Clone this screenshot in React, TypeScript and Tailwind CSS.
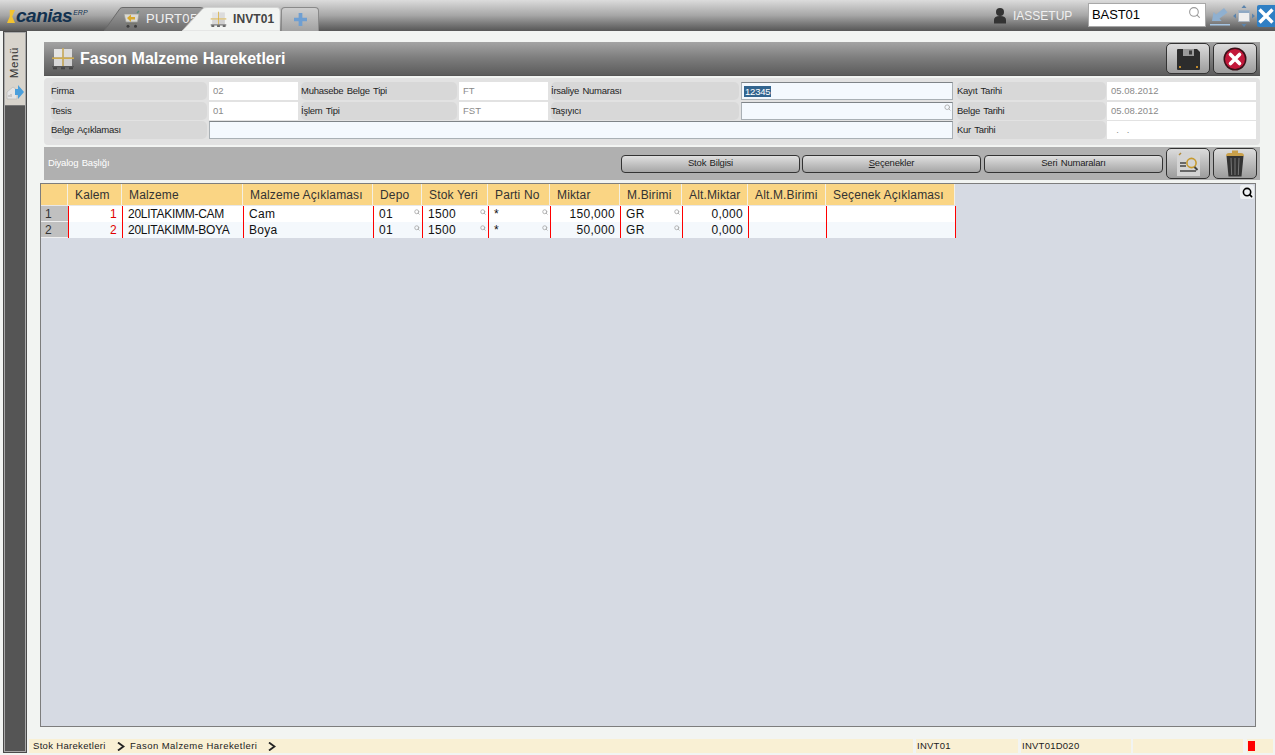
import React from "react";
import { Search } from "lucide-react";

const Pallet = ({ s = 24 }: { s?: number }) => (
  <svg width={s} height={s} viewBox="0 0 24 24">
    <rect x="3" y="2" width="8.5" height="8.5" fill="#e4e4e4" />
    <rect x="12.5" y="2" width="8.5" height="8.5" fill="#dcdcdc" />
    <rect x="3" y="12" width="8.5" height="7" fill="#d8d8d8" />
    <rect x="12.5" y="12" width="8.5" height="7" fill="#d0d0d0" />
    <rect x="1" y="10.500" width="22" height="1.400" fill="#d9b24a" />
    <rect x="11.400" y="1" width="1.200" height="18" fill="#d9b24a" />
    <rect x="1" y="19" width="22" height="1.300" fill="#555" />
    <rect x="2" y="20.300" width="4" height="2" fill="#444" />
    <rect x="10" y="20.300" width="4" height="2" fill="#444" />
    <rect x="18" y="20.300" width="4" height="2" fill="#444" />
  </svg>
);

const Cart = () => (
  <svg width="18" height="20" viewBox="0 0 18 20">
    <path d="M1 5h15l-1.500 8H3z" fill="#d9d9d4" stroke="#9a9a94" strokeWidth=".7" />
    <path d="M4 9l4-3.500V8h4v2.500H8V13z" fill="#d8a92e" />
    <rect x="3" y="14" width="11" height="1.300" fill="#77776f" />
    <circle cx="5" cy="17.300" r="1.500" fill="#3e3e3e" />
    <circle cx="12.500" cy="17.300" r="1.500" fill="#3e3e3e" />
    <path d="M14 4l2-2" stroke="#5a8c7a" strokeWidth="1.500" />
  </svg>
);

const TopTabs = () => (
  <div className="flex h-[31px] items-end ml-[7px] relative">
    <div className="relative w-[100px] h-[24px] flex items-center">
      <svg className="absolute left-0 top-0" width="100" height="24" viewBox="0 0 100 24">
        <path d="M0 24L16 1.500Q17 .5 19 .5H96Q99 .5 101 3L100 24z" fill="#7d7d7d" fillOpacity=".55" stroke="#6a6a6a" strokeWidth="1" />
      </svg>
      <div className="relative ml-[19px] flex items-center gap-[5px]">
        <Cart />
        <span className="text-[13px] text-[#f0f0f0] tracking-[.3px] font-['Liberation_Sans',sans-serif] whitespace-nowrap">PURT05</span>
      </div>
    </div>
    <div className="relative ml-[-22px] w-[99px] h-[24px] flex items-center">
      <svg className="absolute left-0 top-0" width="99" height="24" viewBox="0 0 99 24">
        <path d="M0 24L21 1.500Q22.500 .5 25 .5H95Q98 .5 98 4V24z" fill="#f2f4f2" stroke="#d0d0d0" strokeWidth=".8" />
      </svg>
      <div className="relative ml-[28px] flex items-center gap-[6px]">
        <Pallet s={17} />
        <span className="text-[12px] font-bold text-[#444] tracking-[.1px] font-['Liberation_Sans',sans-serif]">INVT01</span>
      </div>
    </div>
    <div className="w-[38px] h-[24px] border border-b-0 border-[#8a8a8a] rounded-t-[4px] bg-gradient-to-b from-[#cfcfcf] to-[#a2a2a2] flex items-center justify-center">
      <svg width="13" height="13" viewBox="0 0 14 14">
        <path d="M5 0h4v5h5v4H9v5H5V9H0V5h5z" fill="#6f9fd2" />
      </svg>
    </div>
  </div>
);

const TopBar = () => (
  <div className="h-[31px] shrink-0 flex items-end bg-gradient-to-b from-[#dcdcdc] via-[#a6a6a6] to-[#565656] font-['Liberation_Sans',sans-serif]">
    <div className="w-[97px] h-[31px] flex items-center pl-[7px] shrink-0">
      <div className="w-[8px] h-[13px] bg-[#f2c230] mr-[1px] mt-[2px] [clip-path:polygon(35%_0,100%_0,65%_50%,100%_100%,0_100%,35%_50%)]" />
      <span className="text-[19px] leading-none font-bold italic text-[#12314f] tracking-[-.5px] font-['Liberation_Sans',sans-serif]">canias</span>
      <span className="text-[7px] italic text-[#12314f] self-start mt-[8px] ml-[1px]">ERP</span>
    </div>
    <TopTabs />
    <div className="flex-1" />
    <div className="flex items-center h-[31px]">
      <svg width="14" height="18" viewBox="0 0 14 18" className="mr-[6px]">
        <circle cx="7" cy="5" r="4" fill="#333" />
        <path d="M1 16.500V13q0-4 6-4t6 4v3.500z" fill="#333" />
      </svg>
      <span className="text-[12px] text-[#f0f0f0] w-[75px]">IASSETUP</span>
      <div className="w-[118px] h-[24px] bg-white border border-[#a8a8a8] flex items-center justify-between pl-[3px] pr-[4px] mb-[1px]">
        <span className="text-[13px] text-black tracking-[-.1px]">BAST01</span>
        <Search size={13} color="#9a9a9a" className="mb-[5px]" />
      </div>
      <svg width="22" height="22" viewBox="0 0 22 22" className="ml-[3px]">
        <path d="M3 16l1.500-9 2.600 2.600L15 3l3.500 4.500-8 6 2.200 2.500z" fill="#8fb0d0" />
        <rect x="1" y="19" width="20" height="1.500" fill="#a6c6e4" />
      </svg>
      <svg width="22" height="22" viewBox="0 0 22 22" className="ml-[2px]">
        <rect x="5.500" y="5.500" width="11" height="11" fill="#eee" stroke="#a8b4c0" strokeWidth=".8" />
        <rect x="5.500" y="5.500" width="11" height="2.500" fill="#8fa9c4" />
        <path d="M11 0l2.500 3h-5zM11 22l2.500-3h-5zM0 11l3-2.500v5zM22 11l-3-2.500v5z" fill="#5b84ad" />
      </svg>
      <div className="w-[18px] h-[22px] bg-[#2f7fc4] flex items-center justify-center ml-[2px] rounded-l-[2px] overflow-hidden">
        <svg width="18" height="18" viewBox="0 0 18 18">
          <path d="M2.500 2.500l13 13M15.500 2.500l-13 13" stroke="#fff" strokeWidth="3.400" />
        </svg>
      </div>
    </div>
  </div>
);

const SideBar = () => (
  <div className="w-[22px] ml-[4px] mr-[3px] shrink-0 flex flex-col bg-[#555555] border border-[#a8a8a8] outline outline-1 outline-[#4a4a4a] mt-[1px] mb-[3px]">
    <div className="h-[73px] bg-[#d8d4cc] flex flex-col items-center border-b border-[#777]">
      <span className="text-[11.500px] text-[#333] font-['Liberation_Sans',sans-serif] [writing-mode:vertical-rl] rotate-180 mt-[14px] tracking-[.6px] whitespace-nowrap">Menü</span>
      <svg width="19" height="17" viewBox="0 0 19 17" className="mt-[6px]">
        <path d="M1 15V8l6-5 4 3v9z" fill="#e4e4e4" stroke="#b4b4b4" strokeWidth=".6" />
        <path d="M3 13v-2M5 13v-3" stroke="#9a9a9a" strokeWidth=".8" />
        <path d="M9 5h3V1l6 7-6 7v-4H9z" fill="#4a9fdc" />
      </svg>
    </div>
  </div>
);

const Label = ({ w, children }: { w: number; children: React.ReactNode }) => (
  <div style={{ width: w }} className="h-[18px] rounded-[5px] bg-[#d8d8d8] flex items-center text-[9.5px] tracking-[-.25px] [word-spacing:1px] text-[#1f1f1f] whitespace-nowrap shrink-0">
    {children}
  </div>
);

const RO = ({ w, children }: { w: number; children?: React.ReactNode }) => (
  <div style={{ width: w }} className="h-[18px] bg-white flex items-center pl-[4px] text-[9.5px] text-[#8a8a8a] shrink-0 whitespace-pre">
    {children}
  </div>
);

const Edit = ({ w, children }: { w: number; children?: React.ReactNode }) => (
  <div style={{ width: w }} className="relative h-[18px] bg-[#f4f9fe] border border-[#a9b0b5] border-t-[#7f8488] flex items-center pl-[2px] text-[9.5px] shrink-0">
    {children}
  </div>
);

const Form = () => (
  <div className="mt-[2px] h-[67px] bg-[#e2e2e2] rounded-[4px] pt-[4px] pl-[7px] flex flex-col gap-[2px] font-['Liberation_Sans',sans-serif]">
    <div className="flex">
      <Label w={156}>Firma</Label>
      <div className="w-[2px]" />
      <RO w={89}>02</RO>
      <div className="w-[3px]" />
      <Label w={156}>Muhasebe Belge Tipi</Label>
      <div className="w-[2px]" />
      <RO w={89}>FT</RO>
      <div className="w-[3px]" />
      <Label w={188}>İrsaliye Numarası</Label>
      <div className="w-[2px]" />
      <Edit w={212}>
        <span className="bg-[#33658f] text-white leading-[11px] px-[1px] tracking-[-.2px]">12345</span>
      </Edit>
      <div className="w-[4px]" />
      <Label w={149}>Kayıt Tarihi</Label>
      <div className="w-[1px]" />
      <RO w={149}>05.08.2012</RO>
    </div>
    <div className="flex">
      <Label w={156}>Tesis</Label>
      <div className="w-[2px]" />
      <RO w={89}>01</RO>
      <div className="w-[3px]" />
      <Label w={156}>İşlem Tipi</Label>
      <div className="w-[2px]" />
      <RO w={89}>FST</RO>
      <div className="w-[3px]" />
      <Label w={188}>Taşıyıcı</Label>
      <div className="w-[2px]" />
      <Edit w={212}>
        <Search size={7} color="#aaa" strokeWidth={3} className="absolute right-[1px] top-[1px]" />
      </Edit>
      <div className="w-[4px]" />
      <Label w={149}>Belge Tarihi</Label>
      <div className="w-[1px]" />
      <RO w={149}>05.08.2012</RO>
    </div>
    <div className="flex mt-[-1px]">
      <Label w={156}>Belge Açıklaması</Label>
      <div className="w-[2px]" />
      <Edit w={744} />
      <div className="w-[4px]" />
      <Label w={149}>Kur Tarihi</Label>
      <div className="w-[1px]" />
      <RO w={149}>{"  .   ."}</RO>
    </div>
  </div>
);

const TextBtn = ({ w, children, ml = 0 }: { w: number; ml?: number; children: React.ReactNode }) => (
  <div style={{ width: w, marginLeft: ml }} className="h-[18px] rounded-[4px] border border-[#333] bg-gradient-to-b from-[#e0e0e0] to-[#a6a6a6] flex items-center justify-center text-[9.5px] tracking-[-.2px] [word-spacing:1px] text-[#222] shrink-0">
    {children}
  </div>
);

const IconBtn = ({ children, h = 31 }: { children: React.ReactNode; h?: number }) => (
  <div style={{ height: h }} className="w-[44px] rounded-[5px] border border-[#333] bg-gradient-to-b from-[#dcdcdc] to-[#9c9c9c] flex items-center justify-center shrink-0">
    {children}
  </div>
);

const TitleBar = () => (
  <div className="h-[34px] bg-gradient-to-b from-[#a4a4a4] via-[#7c7c7c] to-[#5c5c5c] flex items-center pl-[7px] pr-[3px] border-b border-[#555] font-['Liberation_Sans',sans-serif]">
    <Pallet s={24} />
    <span className="ml-[5px] text-[16px] font-bold text-white">Fason Malzeme Hareketleri</span>
    <div className="flex-1" />
    <div className="flex gap-[3px]">
      <IconBtn>
        <svg width="24" height="22" viewBox="0 0 24 22">
          <path d="M1 2q0-1 1-1h19l3 3v17q0 1-1 1H2q-1 0-1-1z" fill="#2c2c2c" />
          <rect x="7" y="1" width="11" height="7" fill="#9a9a9a" />
          <rect x="13" y="2.500" width="3" height="4" fill="#3a3a3a" />
          <rect x="3" y="18" width="2" height="2" fill="#c08a2a" />
          <rect x="20" y="18" width="2" height="2" fill="#c08a2a" />
        </svg>
      </IconBtn>
      <IconBtn>
        <svg width="24" height="24" viewBox="0 0 24 24">
          <circle cx="12" cy="12" r="11.500" fill="#3a1018" />
          <circle cx="12" cy="12" r="10" fill="#c2183a" />
          <path d="M7.500 7.500l9 9M16.500 7.500l-9 9" stroke="#fff" strokeWidth="3.600" strokeLinecap="round" />
        </svg>
      </IconBtn>
    </div>
  </div>
);

const DialogBar = () => (
  <div className="mt-[2px] h-[33px] bg-[#b0b0b0] flex items-center pl-[4px] pr-[3px] font-['Liberation_Sans',sans-serif]">
    <span className="text-[9.5px] text-white tracking-[-.2px] [word-spacing:1px] w-[573px] shrink-0">Diyalog Başlığı</span>
    <TextBtn w={179}>Stok Bilgisi</TextBtn>
    <TextBtn w={179} ml={2}><span><u>S</u>eçenekler</span></TextBtn>
    <TextBtn w={179} ml={3}>Seri Numaraları</TextBtn>
    <div className="flex gap-[3px] ml-[3px]">
      <IconBtn>
        <svg width="24" height="24" viewBox="0 0 24 24">
          <rect x="1" y="1" width="23" height="23" fill="#d4d4d4" />
          <path d="M3 3l2-2" stroke="#b08a3a" strokeWidth="1.500" />
          <path d="M4 11h6M4 14h6M4 19h16" stroke="#444" strokeWidth="1.600" />
          <circle cx="15.500" cy="11" r="4.600" fill="none" stroke="#c79a2e" strokeWidth="1.600" />
          <path d="M18.500 15l3 3" stroke="#444" strokeWidth="2" />
        </svg>
      </IconBtn>
      <IconBtn>
        <svg width="20" height="27" viewBox="0 0 20 27">
          <rect x="7" y="0.500" width="6" height="3" fill="#c9a04a" />
          <path d="M1 6q0-3 3-3h12q3 0 3 3z" fill="#c9a04a" />
          <path d="M1.500 6h17l-2 20.500h-13z" fill="#333" />
          <path d="M6 8l.7 17M10 8v17M14 8l-.7 17" stroke="#777" strokeWidth="1" />
        </svg>
      </IconBtn>
    </div>
  </div>
);

const cols = [
  { t: "Kalem", w: 54 },
  { t: "Malzeme", w: 121 },
  { t: "Malzeme Açıklaması", w: 130 },
  { t: "Depo", w: 49 },
  { t: "Stok Yeri", w: 66 },
  { t: "Parti No", w: 62 },
  { t: "Miktar", w: 70 },
  { t: "M.Birimi", w: 62 },
  { t: "Alt.Miktar", w: 66 },
  { t: "Alt.M.Birimi", w: 78 },
  { t: "Seçenek Açıklaması", w: 129 },
];

type Cell = { v?: string; right?: boolean; lookup?: boolean; tight?: boolean; red?: boolean };
const rows: Cell[][] = [
  [
    { v: "1", right: true, red: true },
    { v: "20LITAKIMM-CAM", tight: true },
    { v: "Cam" },
    { v: "01", lookup: true },
    { v: "1500", lookup: true },
    { v: "*", lookup: true },
    { v: "150,000", right: true },
    { v: "GR", lookup: true },
    { v: "0,000", right: true },
    {},
    {},
  ],
  [
    { v: "2", right: true, red: true },
    { v: "20LITAKIMM-BOYA", tight: true },
    { v: "Boya" },
    { v: "01", lookup: true },
    { v: "1500", lookup: true },
    { v: "*", lookup: true },
    { v: "50,000", right: true },
    { v: "GR", lookup: true },
    { v: "0,000", right: true },
    {},
    {},
  ],
];

const Grid = () => (
  <div className="relative ml-[-4px] mr-[4px] mt-[3px] h-[544px] bg-[#d6dae3] border border-[#7d7d7d] font-['Liberation_Sans',sans-serif] text-[12px] tracking-[.3px] text-[#111]">
    <div className="flex h-[22px] bg-[#fad584] w-[914px] border-b border-[#e8e8e8]">
      <div className="w-[27px] shrink-0 border-r border-[#f4f0e4]" />
      {cols.map((c) => (
        <div key={c.t} style={{ width: c.w }} className="shrink-0 flex items-center pl-[7px] border-r border-[#f4f0e4] whitespace-nowrap text-[#333] tracking-[.15px]">
          {c.t}
        </div>
      ))}
    </div>
    {rows.map((r, i) => (
      <div key={i} className={`flex h-[16px] w-[915px] ${i % 2 ? "bg-[#f4f8fc]" : "bg-white"}`}>
        <div className="w-[27px] shrink-0 bg-[#c0c0c0] border-b border-[#f0f0f0] pl-[4px] leading-[16px] text-[#333]">{i + 1}</div>
        {r.map((c, j) => (
          <div
            key={j}
            style={{ width: cols[j].w }}
            className={`relative shrink-0 border-l border-[#ff0000] leading-[16px] whitespace-nowrap pl-[5px] ${c.right ? "text-right pr-[5px]" : ""} ${c.red ? "text-[#e00000]" : ""} ${c.tight ? "tracking-[-.27px]" : ""}`}
          >
            {c.v}
            {c.lookup && <Search size={6} color="#aaa" strokeWidth={3.500} className="absolute right-[2px] top-[3px]" />}
          </div>
        ))}
        <div className="w-[1px] bg-[#ff0000] shrink-0" />
      </div>
    ))}
    <div className="absolute right-[1px] top-[1px] w-[14px] h-[14px] bg-[#eef0f2] rounded-[2px] flex items-center justify-center">
      <Search size={11} color="#000" strokeWidth={3.500} />
    </div>
  </div>
);

const Chevron = () => (
  <svg width="8" height="9" viewBox="0 0 8 9" className="shrink-0">
    <path d="M1 .5l5.500 4-5.500 4" fill="none" stroke="#222" strokeWidth="1.800" />
  </svg>
);

const StatusBar = () => (
  <div className="h-[14px] mr-[2px] mb-[2px] flex text-[9.5px] text-[#222] font-['Liberation_Sans',sans-serif] tracking-[.25px] shrink-0">
    <div className="w-[884px] bg-[#f9f0d4] flex items-center pl-[4px] whitespace-nowrap">
      <span className="w-[84px] tracking-[.32px]">Stok Hareketleri</span>
      <Chevron />
      <span className="ml-[5px] w-[138px] tracking-[.45px]">Fason Malzeme Hareketleri</span>
      <Chevron />
    </div>
    <div className="w-[102px] ml-[3px] bg-[#f9f0d4] flex items-center pl-[1px]">INVT01</div>
    <div className="w-[110px] ml-[3px] bg-[#f9f0d4] flex items-center pl-[1px]">INVT01D020</div>
    <div className="w-[110px] ml-[2px] bg-[#f9f0d4]" />
    <div className="w-[26px] ml-[4px] bg-[#f9f0d4] flex items-center pl-[1px]">
      <div className="w-[7px] h-[10px] bg-[#ff0000]" />
    </div>
  </div>
);

export default function App() {
  return (
    <div className="w-[1275px] h-[755px] overflow-hidden bg-[#f2f4f2] flex flex-col">
      <TopBar />
      <div className="flex flex-1 min-h-0">
        <SideBar />
        <div className="flex-1 min-w-0 flex flex-col">
          <div className="flex-1 min-h-0 flex flex-col pl-[15px] pr-[15px] pt-[11px]">
            <TitleBar />
            <Form />
            <DialogBar />
            <Grid />
          </div>
          <StatusBar />
        </div>
      </div>
    </div>
  );
}
